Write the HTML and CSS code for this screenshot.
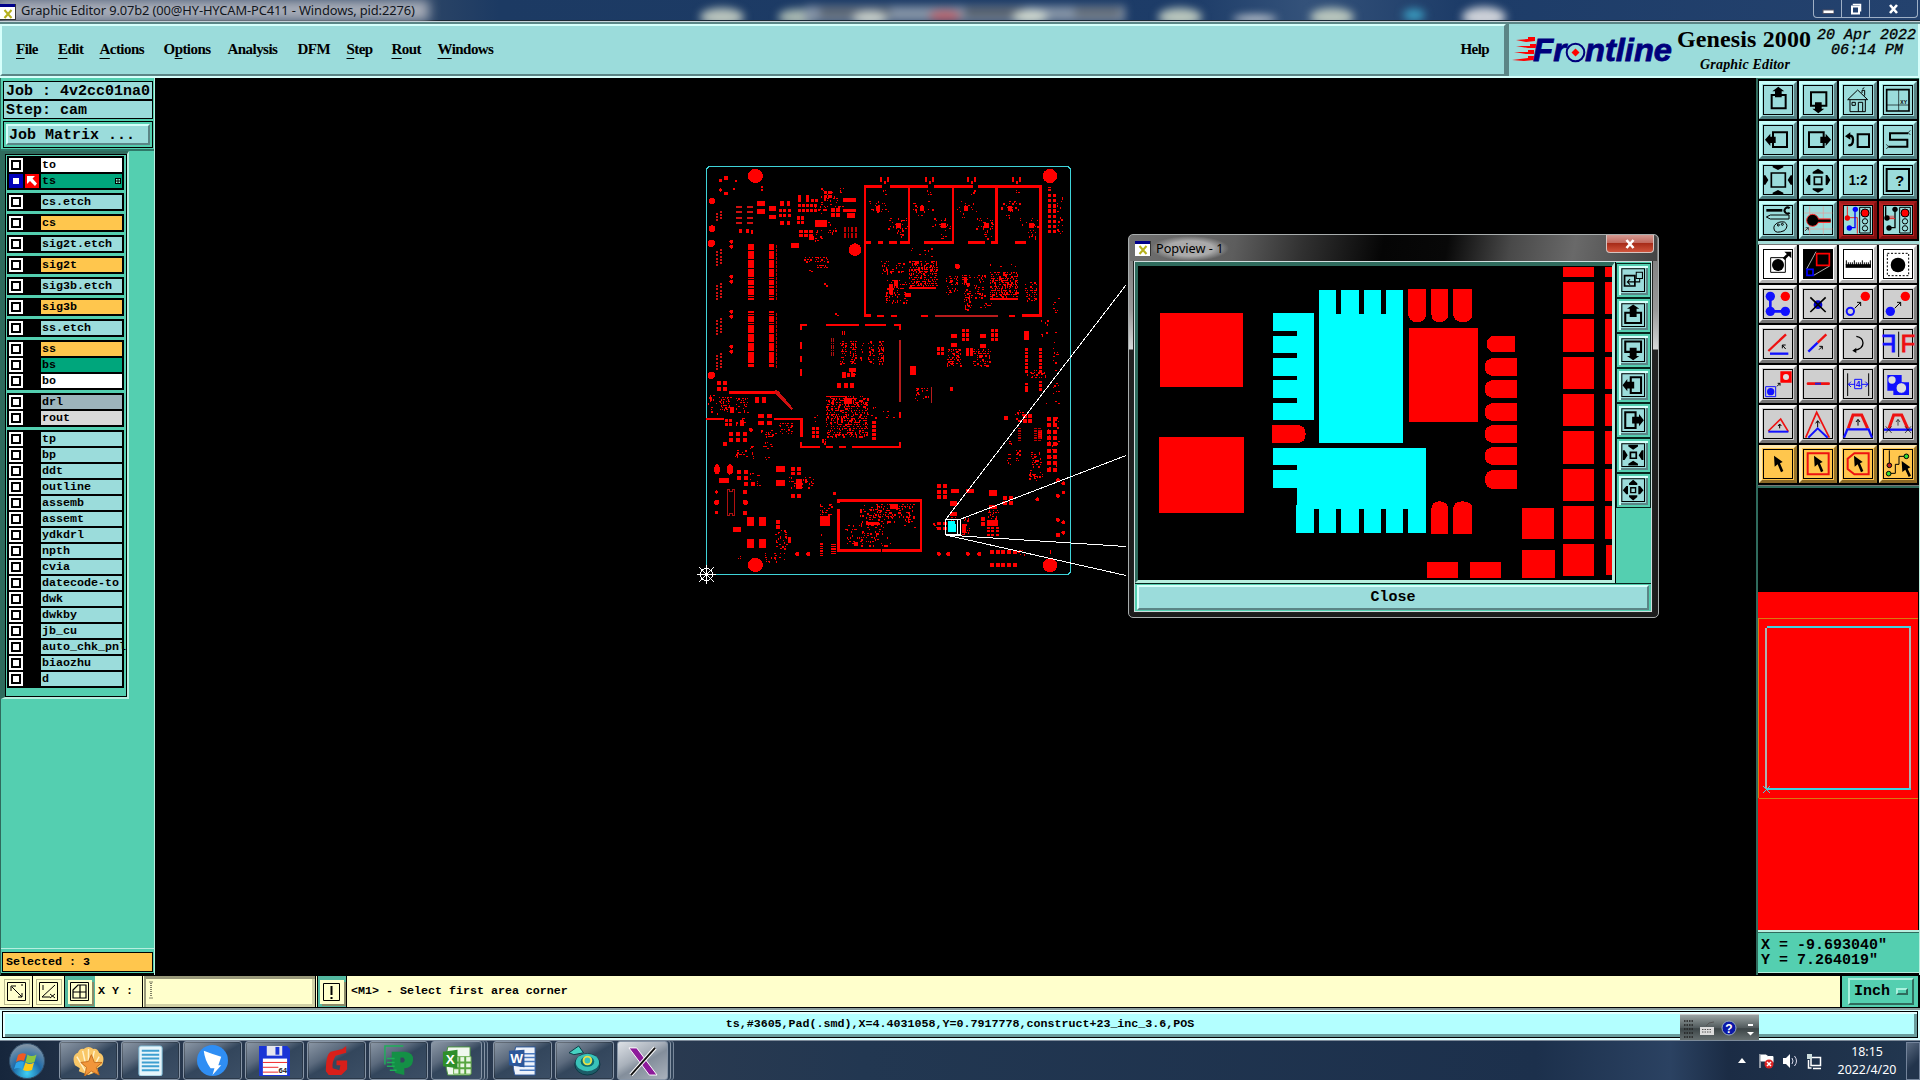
FILE: index.html
```html
<!DOCTYPE html>
<html lang="en">
<head>
<meta charset="utf-8">
<title>Graphic Editor 9.07b2</title>
<link rel="stylesheet" href="styles.css">
</head>
<body>
<header class="titlebar">
  <svg class="smear" width="1920" height="20" viewBox="0 0 1920 20">
    <g class="soft">
      <ellipse cx="722" cy="17" rx="22" ry="9" fill="#b9c4bd"/><ellipse cx="800" cy="17" rx="22" ry="8" fill="#a9b9b2"/>
      <rect x="805" y="6" width="320" height="16" fill="#8291a4"/><rect x="820" y="8" width="70" height="9" fill="#58626f"/><rect x="965" y="8" width="60" height="9" fill="#535c68"/><rect x="1075" y="8" width="45" height="9" fill="#626b76"/>
      <ellipse cx="945" cy="16" rx="16" ry="6" fill="#b86670"/><ellipse cx="870" cy="18" rx="18" ry="7" fill="#c8d0cb"/><ellipse cx="1030" cy="17" rx="18" ry="7" fill="#cfd8cf"/>
      <ellipse cx="1180" cy="17" rx="22" ry="9" fill="#b9c6bd"/><ellipse cx="1255" cy="19" rx="22" ry="4" fill="#c5cbd2"/><ellipse cx="1332" cy="17" rx="22" ry="9" fill="#b9c6bd"/>
      <ellipse cx="1414" cy="15" rx="11" ry="6" fill="#3a9cc0"/><ellipse cx="1484" cy="17" rx="22" ry="10" fill="#cdd1d8"/>
    </g>
  </svg>
  <svg class="appicon" width="16" height="16" viewBox="0 0 16 16"><rect width="16" height="16" fill="#fff"/><rect width="16" height="3" fill="#00008b"/><path d="M4.500 6l7 8M11.500 6l-7 8" stroke="#b5b01c" stroke-width="2"/><path d="M0 15.500H16M15.500 0V16" stroke="#333"/></svg>
  <span class="caption">Graphic Editor 9.07b2 (00@HY-HYCAM-PC411 - Windows, pid:2276)</span>
  <div class="winbtns">
    <span><svg width="12" height="12" viewBox="0 0 12 12"><rect x="1" y="7" width="11" height="3.500" fill="#fff" stroke="#556"/></svg></span>
    <span><svg width="12" height="12" viewBox="0 0 12 12"><path d="M3.500 2V1.500H10.500V8.500" fill="none" stroke="#fff" stroke-width="1.500"/><rect x="2" y="3.500" width="7" height="7" fill="none" stroke="#fff" stroke-width="2"/></svg></span>
    <span class="x"><svg width="12" height="12" viewBox="0 0 12 12"><path d="M2 2l7 8M9 2l-7 8" stroke="#fff" stroke-width="2.600"/></svg></span>
  </div>
</header>

<div class="header">
  <nav class="menubar">
    <span><u>F</u>ile</span><span><u>E</u>dit</span><span><u>A</u>ctions</span><span>O<u>p</u>tions</span><span>Analysis</span><span>DFM</span><span><u>S</u>tep</span><span><u>R</u>out</span><span><u>W</u>indows</span><span>Help</span>
  </nav>
  <div class="brand">
    <svg width="410" height="52" viewBox="1510 24 410 52">
      <g fill="#f00"><path d="M1516 40l12-1v-2h7v4l-9 1zM1516 46l14 0v-2h6v4h-8zM1514 52h14v-2h6v4h-8zM1512 60l16-2v-2h6v4l-10 1z"/></g>
      <g class="logo"><text x="1533" y="60.500" textLength="33" lengthAdjust="spacingAndGlyphs">Fr</text><text x="1585" y="60.500" textLength="87" lengthAdjust="spacingAndGlyphs">ntline</text></g>
      <circle cx="1575.500" cy="52.500" r="8.800" fill="none" stroke="#00007c" stroke-width="2"/><path d="M1575.500 48.500l4 4-4 4-4-4z" fill="#f00"/>
      <text class="product" x="1677" y="46.500" textLength="134">Genesis 2000</text>
      <text class="sub" x="1700" y="69" textLength="90">Graphic Editor</text>
      <text class="clock" x="1817" y="39">20 Apr 2022</text><text class="clock" x="1831" y="54">06:14 PM</text>
    </svg>
  </div>
</div>

<main class="main">
  <aside class="left">
    <div class="jobs">
      <div class="field">Job : 4v2cc01na0</div>
      <div class="field">Step: cam</div>
      <div class="matrix"><div class="bevel">Job Matrix ...</div></div>
    </div>
    <div class="layerwrap">
      <div class="layers">
        <div class="grp"><p><i></i><b class="w">to</b></p><p class="sel"><i></i><svg width="14" height="14" viewBox="0 0 14 14"><rect width="14" height="14" fill="#f00"/><path d="M2 2h8L7.500 4.500 12 9.500 10 12 5 7 2 10z" fill="#fff"/></svg><b class="g">ts<svg width="6" height="6" viewBox="0 0 6 6"><rect width="6" height="6"/><path d="M1 1h1.500v1.500H1zM3.500 1H5v1.500H3.500zM1 3.500h1.500V5H1zM3.500 3.500H5V5H3.500z" fill="#9fd"/></svg></b></p></div>
        <div class="grp"><p><i></i><b>cs.etch</b></p></div>
        <div class="grp"><p><i></i><b class="o">cs</b></p></div>
        <div class="grp"><p><i></i><b>sig2t.etch</b></p></div>
        <div class="grp"><p><i></i><b class="o">sig2t</b></p></div>
        <div class="grp"><p><i></i><b>sig3b.etch</b></p></div>
        <div class="grp"><p><i></i><b class="o">sig3b</b></p></div>
        <div class="grp"><p><i></i><b>ss.etch</b></p></div>
        <div class="grp"><p><i></i><b class="o">ss</b></p><p><i></i><b class="g">bs</b></p><p><i></i><b class="w">bo</b></p></div>
        <div class="grp"><p><i></i><b class="d">drl</b></p><p><i></i><b class="r">rout</b></p></div>
        <div class="grp"><p><i></i><b>tp</b></p><p><i></i><b>bp</b></p><p><i></i><b>ddt</b></p><p><i></i><b>outline</b></p><p><i></i><b>assemb</b></p><p><i></i><b>assemt</b></p><p><i></i><b>ydkdrl</b></p><p><i></i><b>npth</b></p><p><i></i><b>cvia</b></p><p><i></i><b>datecode-to</b></p><p><i></i><b>dwk</b></p><p><i></i><b>dwkby</b></p><p><i></i><b>jb_cu</b></p><p><i></i><b>auto_chk_pnl</b></p><p><i></i><b>biaozhu</b></p><p><i></i><b>d</b></p></div>
      </div>
    </div>
    <div class="selected"><div>Selected : 3</div></div>
  </aside>

  <section class="canvas">
    <svg width="1601" height="897" viewBox="155 78 1601 897" shape-rendering="crispEdges">
      <path d="M709 166.500H1068L1070.500 169V572L1068 574.500H706.500V169z" fill="none" stroke="#3fd3d8"/>
      <g id="board" fill="#f00"></g>
      <path d="M948 521h7v3h1v8h-8z" fill="#0ff"/>
      <path d="M945.500 519.500h15v15h-15zM957.500 520v14" fill="none" stroke="#fff"/>
      <path d="M946 519L1126 285M961 519L1126 455.500M946 535L1126 546.500M946 535L1126 575.500" fill="none" stroke="#fff"/>
      <g fill="none" stroke="#fff"><circle cx="706.500" cy="574.500" r="6"/><path d="M706.500 565v19M697 574.500h19M699 567l15 15M714 567l-15 15"/></g>
    </svg>

    <div class="pop">
      <div class="poptitle">
        <svg width="16" height="15" viewBox="0 0 16 15"><rect width="16" height="15" fill="#fff"/><rect width="16" height="3" fill="#00008b"/><path d="M4.500 5l7 8M11.500 5l-7 8" stroke="#b5b01c" stroke-width="2"/><path d="M15.500 0V15" stroke="#333"/></svg>
        <span>Popview - 1</span>
        <div class="popx"><svg width="12" height="10" viewBox="0 0 12 10"><path d="M2.500 1l7 8M9.500 1l-7 8" stroke="#fff" stroke-width="2.600"/></svg></div>
      </div>
      <div class="popbody">
        <div class="poprow">
          <div class="popcanvas">
            <svg width="474" height="312" viewBox="51 123 1351 936" preserveAspectRatio="none" shape-rendering="crispEdges">
              <g fill="#f00"><path d="M114 264h237v222H114zM111 636h243v228H111zM824 309h197v282H824zM1146 849h91v93h-91zM1146 975h94v84h-94zM875 1011h89v48h-89zM998 1011h88v48h-88z"/>
              <path d="M1263 126h88v30h-88zM1263 171h88v96h-88zM1263 282h88v99h-88zM1263 396h88v96h-88zM1263 507h88v96h-88zM1263 618h88v99h-88zM1263 732h88v96h-88zM1263 843h88v99h-88zM1263 957h88v96h-88z"/>
              <path d="M1383 126h19v30h-19zM1383 171h19v96h-19zM1383 282h19v99h-19zM1383 396h19v96h-19zM1383 507h19v96h-19zM1383 618h19v99h-19zM1383 732h19v96h-19zM1383 843h19v99h-19zM1386 960h16v90h-16z"/>
              <path d="M821 192h51v75q0 24-25 24t-26-24zM887 192h48v75q0 24-24 24t-24-24zM949 192h55v75q0 24-27 24t-28-24zM887 927v-73q0-25 24-25t24 25v73zM949 927v-73q0-25 28-25t27 25v73zM433 600h70q26 0 26 27t-26 27h-70z"/>
              <path d="M1126 333v48h-57q-24 0-24-24t24-24zM1132 399v54h-66q-26 0-26-27t26-27zM1132 465v54h-66q-26 0-26-27t26-27zM1132 534v54h-66q-26 0-26-27t26-27zM1132 600v54h-66q-26 0-26-27t26-27zM1132 666v54h-66q-26 0-26-27t26-27zM1132 735v57h-66q-26 0-26-28t26-29z"/></g>
              <path fill="#0ff" d="M436 264H553V585H436V534H505V519H436V465H505V453H436V399H505V384H436V333H505V318H436zM567 195h49v72h14v-72h51v72h15v-72h48v72h14v-72h49V654H567zM436 669H872V924H821V852H807V924H758V852H744V924H696V852H681V924H630V852H616V924H567V852H553V924H502V840H505V789H436V735H505V720H436z"/>
            </svg>
          </div>
          <div class="poptools">
            <div><svg viewBox="0 0 96 96"><path d="M14 14h66v66H14z"/><path d="M22 34h30v30H22z" stroke-width="5"/><path d="M56 24h18v18H56zM66 42v10H32M38 44l-8 8 8 8"/></svg></div>
            <div><svg viewBox="0 0 96 96"><path d="M14 14h66v66H14z"/><path d="M24 40h46v30H24z" stroke-width="6"/><path class="f" d="M47 16l18 12h-8v24H37V28h-8z"/></svg></div>
            <div><svg viewBox="0 0 96 96"><path d="M14 14h66v66H14z"/><path d="M24 22h46v30H24z" stroke-width="6"/><path class="f" d="M47 76l18-12h-8V40H37v24h-8z"/></svg></div>
            <div><svg viewBox="0 0 96 96"><path d="M14 14h66v66H14z"/><path d="M40 24h30v46H40z" stroke-width="6"/><path class="f" d="M16 47l14-18v8h20v20H30v8z"/></svg></div>
            <div><svg viewBox="0 0 96 96"><path d="M14 14h66v66H14z"/><path d="M24 24h30v46H24z" stroke-width="6"/><path class="f" d="M78 47L64 29v8H44v20h20v8z"/></svg></div>
            <div><svg viewBox="0 0 96 96"><path d="M14 14h66v66H14z"/><path d="M39 39h17v17H39z" stroke-width="5"/><path class="f" d="M33 17h28v5L47 31l-14-9zM33 77h28v-5L47 63l-14 9zM17 33v28h5l9-14-9-14zM77 33v28h-5l-9-14 9-14z"/></svg></div>
            <div><svg viewBox="0 0 96 96"><path d="M14 14h66v66H14z"/><path d="M40 40h14v14H40z" stroke-width="4"/><path class="f" d="M35 32h24v-5L47 17l-12 10zM35 62h24v5L47 77 35 67zM32 35v24h-5L17 47l10-12zM62 35v24h5l10-12-10-12z"/></svg></div>
          </div>
        </div>
        <div class="closebar"><button>Close</button></div>
      </div>
    </div>
  </section>

  <aside class="right">
    <div class="tools t1">
      <div><svg viewBox="0 0 114 114"><path d="M38 42h42v40H38z" stroke-width="6"/><path class="f" d="M58 17l18 14h-8v18H48V31h-8z"/></svg></div>
      <div><svg viewBox="0 0 114 114"><path d="M36 34h46v40H36z" stroke-width="6"/><path class="f" d="M58 97l18-14h-8V64H48v19h-8z"/></svg></div>
      <div><svg viewBox="0 0 114 114"><path d="M26 56L56 27l30 29zM33 56v36h46V56M39 64h10v9H39zM58 92V64h13v28M69 36V28h8v16M70 24l6-4"/></svg></div>
      <div><svg viewBox="0 0 114 114"><path d="M23 26h67v64H23z" stroke-width="5"/><path d="M59 26v64M23 72h67" stroke-width="2"/><text class="tiny" x="74" y="68">XY</text></svg></div>
      <div><svg viewBox="0 0 114 114"><path d="M42 34h42v44H42z" stroke-width="6"/><path class="f" d="M18 56l16-18v9h16v19H34v9z"/></svg></div>
      <div><svg viewBox="0 0 114 114"><path d="M30 34h44v44H30z" stroke-width="6"/><path class="f" d="M96 56L80 38v9H64v19h16v9z"/></svg></div>
      <div><svg viewBox="0 0 114 114"><path d="M56 40h34v38H56z" stroke-width="6"/><path d="M28 72q14 4 14-16 0-12-10-12" stroke-width="7"/><path class="f" d="M18 46l16-12v22z"/></svg></div>
      <div><svg viewBox="0 0 114 114"><path d="M88 37H33v19h52v21H28" stroke-width="6"/><path d="M94 28l-6 7 6 7M22 70l6 7-6 7" stroke-width="2"/></svg></div>
      <div><svg viewBox="0 0 114 114"><path d="M37 36h42v42H37z" stroke-width="5"/><path class="f" d="M41 15h32v4L57 27l-16-8zM41 99h32v-4L57 87l-16 8zM14 43v28h5l9-14-9-14zM100 43v28h-5l-9-14 9-14z"/></svg></div>
      <div><svg viewBox="0 0 114 114"><path d="M46 48h22v22H46z" stroke-width="5"/><path class="f" d="M41 38h32v-5L57 23l-16 10zM41 82h32v4l-16 9-16-9zM34 42v30h-5l-9-15 9-15zM80 42v30h5l9-15-9-15z"/></svg></div>
      <div><svg viewBox="0 0 114 114"><text x="57" y="73" textLength="56" lengthAdjust="spacingAndGlyphs">1:2</text></svg></div>
      <div><svg viewBox="0 0 114 114"><path d="M23 24h67v66H23z" stroke-width="6"/><text x="62" y="76">?</text></svg></div>
      <div><svg viewBox="0 0 114 114"><path d="M22 28h48" stroke-width="8"/><path d="M92 22a9 9 0 1 0 0 13" stroke-width="6"/><path d="M22 48l12-6h56v12H34zM46 74q10-14 30-11 16 10 0 26-26 10-30-2-3-6 0-13"/><circle cx="58" cy="72" r="3"/><circle cx="70" cy="70" r="3"/></svg></div>
      <div><svg viewBox="0 0 114 114"><path d="M32 16v84M73 16v84M16 36h84M16 84h84" stroke="#e59b98" stroke-width="2"/><path d="M41 59h54" stroke="#f33" stroke-width="14"/><circle cx="41" cy="58" r="18" fill="#000" stroke="#f33"/><path d="M41 59h54" stroke-width="7"/><path d="M18 90l10-10M20 80h8v8" stroke-width="2"/></svg></div>
      <div class="alert"><svg viewBox="0 0 114 114"><path d="M25 16v34h30v48" stroke="#e22"/><path d="M48 25v55H30" stroke="#00f" stroke-width="4"/><circle cx="25" cy="51" r="8" fill="#e00" stroke="none"/><g fill="#00f" stroke="none"><circle cx="49" cy="25" r="8"/><circle cx="31" cy="81" r="8"/></g><path d="M62 19h32v77H62z"/><circle cx="78" cy="36" r="12" fill="#f00"/><circle cx="78" cy="61" r="8"/><circle cx="78" cy="82" r="8"/></svg></div>
      <div class="alert"><svg viewBox="0 0 114 114"><path d="M20 16v34M48 25v55H30" stroke-width="4"/><path d="M25 53h23M30 44v8M36 44v8M42 44v8" stroke="#e22"/><g fill="#000" stroke="none"><circle cx="24" cy="51" r="8"/><circle cx="48" cy="25" r="8"/><circle cx="30" cy="81" r="8"/></g><path d="M62 19h32v77H62z"/><circle cx="78" cy="36" r="12" fill="#f00"/><circle cx="78" cy="61" r="8"/><circle cx="78" cy="82" r="8"/></svg></div>
    </div>
    <div class="tools t2">
      <div class="wh"><svg viewBox="0 0 114 114"><path d="M35 38h44v44H35z"/><circle class="f" cx="57" cy="60" r="18"/><path d="M74 42l14-14" stroke-width="8"/><path class="f" d="M76 20h21v20z"/></svg></div>
      <div class="wh"><svg viewBox="0 0 114 114"><path class="f" d="M15 15h84v84H15z"/><path d="M23 72l28-52M44 91l48-28" stroke="#fff" stroke-width="2"/><path d="M53 26h38v35H53z" stroke="#f00" stroke-width="5"/><path d="M24 73h18v18H24z" stroke="#00f" stroke-width="5"/></svg></div>
      <div class="wh"><svg viewBox="0 0 114 114"><path d="M20 63h76" stroke-width="11"/><path d="M22 46v14M28 52v8M34 52v8M40 52v8M46 46v14M52 52v8M58 52v8M64 52v8M70 46v14M76 52v8M82 52v8M88 52v8M94 46v14"/></svg></div>
      <div class="wh"><svg viewBox="0 0 114 114"><path d="M25 25h64v67H25z" stroke-dasharray="6 5"/><circle class="f" cx="57" cy="60" r="22"/></svg></div>

      <div><svg viewBox="0 0 114 114"><path d="M34 34v45h45" stroke="#11f" stroke-width="8"/><g fill="#11f" stroke="none"><circle cx="34" cy="34" r="14"/><circle cx="34" cy="79" r="14"/><circle cx="79" cy="79" r="14"/></g><circle cx="79" cy="34" r="14" fill="#f00" stroke="none"/></svg></div>
      <div><svg viewBox="0 0 114 114"><circle cx="57" cy="59" r="13" fill="#00c" stroke="none"/><path d="M34 37l46 44M80 37L34 81" stroke-width="5"/></svg></div>
      <div><svg viewBox="0 0 114 114"><circle cx="34" cy="79" r="11" stroke="#11f" stroke-width="6"/><circle cx="79" cy="34" r="14" fill="#f00" stroke="none"/><path d="M47 70l18-18M54 52h11v11"/></svg></div>
      <div><svg viewBox="0 0 114 114"><circle cx="34" cy="79" r="14" fill="#11f" stroke="none"/><circle cx="79" cy="34" r="14" fill="#f00" stroke="none"/><path d="M47 70l18-18M54 52h11v11"/></svg></div>

      <div><svg viewBox="0 0 114 114"><path d="M28 78l53-50" stroke="#e11" stroke-width="7"/><path d="M33 86h55" stroke="#11f" stroke-width="7"/><path d="M80 72L70 60M70 70V60h10"/></svg></div>
      <div><svg viewBox="0 0 114 114"><path d="M28 80l28-27" stroke="#11f" stroke-width="7"/><path d="M56 53l26-25" stroke="#e11" stroke-width="7"/><path d="M60 74l10-10M61 64h9v9"/></svg></div>
      <div><svg viewBox="0 0 114 114"><path d="M52 34q20 4 20 20 0 18-26 22" stroke-width="4"/><path class="f" d="M40 77l12-9v16z"/></svg></div>
      <div><svg viewBox="0 0 114 114"><g transform="translate(118 0) scale(-1 1)"><text class="eff blue" x="66" y="82">F</text></g><path d="M59 20v76"/><text class="eff" x="65" y="82">F</text></svg></div>

      <div><svg viewBox="0 0 114 114"><path d="M67 22h28v28H67z" stroke="#f00" stroke-width="6" fill="#f00"/><circle cx="81" cy="36" r="9" fill="#ddd" stroke="none"/><path d="M20 65h30v30H20z" stroke="#11f"/><circle cx="35" cy="80" r="11" fill="#11f" stroke="none"/><path d="M54 64l9-9M56 55h7v7"/></svg></div>
      <div><svg viewBox="0 0 114 114"><path d="M27 56h62" stroke="#e11" stroke-width="8" stroke-linecap="round"/><path d="M48 56h18" stroke="#22d" stroke-width="6"/></svg></div>
      <div><svg viewBox="0 0 114 114"><path d="M26 25v68M89 25v68"/><path d="M28 58h20M68 58h19M36 50l-8 8 8 8M79 50l8 8-8 8M47 43h21v28H47z" stroke="#11f"/><text class="dim" x="57.500" y="67">4</text></svg></div>
      <div><svg viewBox="0 0 114 114"><path d="M25 30h43v22h22v38H43V77H25z" fill="#11f" stroke="none"/><circle cx="39" cy="45" r="11" fill="#ddd" stroke="none"/><circle cx="67" cy="69" r="16" fill="#ddd" stroke="#11f"/></svg></div>

      <div><svg viewBox="0 0 114 114"><path d="M28 78l37-36 23 38" stroke="#e11" stroke-width="5"/><path d="M28 80h60" stroke="#11f" stroke-width="6"/><path d="M62 70V58M57 63l5-6 5 6"/></svg></div>
      <div><svg viewBox="0 0 114 114"><path d="M20 98L53 22l38 76" stroke="#e11" stroke-width="5"/><path d="M28 98l28-28 30 28" stroke="#11f" stroke-width="6"/><path d="M56 66V48M50 55l6-8 6 8"/></svg></div>
      <div><svg viewBox="0 0 114 114"><path d="M28 70l14-40h26l18 40" stroke="#e11" stroke-width="9"/><path d="M15 98l10-25h64l10 25" stroke="#11f" stroke-width="7"/><path d="M57 62V44M51 51l6-8 6 8"/></svg></div>
      <div><svg viewBox="0 0 114 114"><path d="M30 70l14-40h24l18 40" stroke="#e11" stroke-width="9"/><path d="M15 74h84" stroke="#11f" stroke-width="7"/><path d="M20 64l18 20M38 64L20 84M78 64l18 20M96 64L78 84M57 62V44M51 51l6-8 6 8" stroke-width="2"/></svg></div>

      <div class="or"><svg viewBox="0 0 114 114"><path class="f" d="M45 32l26 19-8 4 10 23-7 4-10-24-9 7z"/></svg></div>
      <div class="or"><svg viewBox="0 0 114 114"><path d="M26 25h63v63H26z" stroke="#e11" stroke-width="6"/><path class="f" d="M45 32l26 19-8 4 10 23-7 4-10-24-9 7z"/></svg></div>
      <div class="or"><svg viewBox="0 0 114 114"><path d="M46 25h43v63H46L26 72V41z" stroke="#e11" stroke-width="6"/><path class="f" d="M45 32l26 19-8 4 10 23-7 4-10-24-9 7z"/></svg></div>
      <div class="or"><svg viewBox="0 0 114 114"><path d="M31 16v44M31 85h18V58h11V34h20"/><circle cx="31" cy="61" r="7" fill="#b22"/><circle cx="29" cy="86" r="7" fill="#3d3"/><circle cx="82" cy="34" r="7" fill="#3d3"/><path class="f" d="M68 48l26 19-8 4 10 21-7 4-10-22-9 7z"/></svg></div>
    </div>
    <div class="overview">
      <svg width="161" height="442" viewBox="1758 488 161 442" shape-rendering="crispEdges">
        <rect x="1758" y="488" width="161" height="442" fill="#000"/><rect x="1758" y="592" width="160" height="338" fill="#f00"/>
        <path d="M1758.500 618.500H1918M1758.500 798.500H1918M1758.500 618v180" stroke="#d87a10" fill="none"/>
        <path d="M1766 788V628M1910 628v160" stroke="#b0b0b0" stroke-width="2" fill="none"/><path d="M1767 627h144M1766 789h145" stroke="#3fd3e0" stroke-width="2"/>
        <path d="M1763 786l7 7M1770 786l-7 7" stroke="#3fd3e0"/>
      </svg>
    </div>
    <div class="coords"><div>X = -9.693040"</div><div>Y = 7.264019"</div></div>
  </aside>
</main>

<div class="command">
  <div class="cbtn"><svg width="20" height="20" viewBox="0 0 20 20"><path d="M.5.500h18v18H.5z"/><path d="M5 5l10 10M4 9V4h5M15 11v4h-4M15 2v2"/></svg></div>
  <div class="cbtn"><svg width="20" height="20" viewBox="0 0 20 20"><path d="M.5.500h18v18H.5z"/><path d="M16 3L3 15h8M4 3v5M11 12l5 4M16 12l-5 4"/></svg></div>
  <div class="cbtn gr"><svg width="20" height="20" viewBox="0 0 20 20"><path d="M.5.500h18v18H.5z"/><path d="M3 8l5-5h8v13H3zM10 3v13M3 10h13" stroke-width="1.200"/></svg></div>
  <div class="xy">X Y :</div>
  <div class="entry"><svg width="4" height="18" viewBox="0 0 4 18"><path d="M2 2v14M.5 1h1M2.500 1h1M.5 17h1M2.500 17h1" stroke="#000" stroke-dasharray="1 1"/></svg></div>
  <div class="cbtn gr ex"><svg width="20" height="20" viewBox="0 0 20 20"><path d="M1.500 1.500h16v17h-16z"/><path d="M9.500 4v9M9.500 15v2" stroke-width="2"/></svg></div>
  <div class="msg">&lt;M1&gt; - Select first area corner</div>
  <div class="unit"><div>Inch<i></i></div></div>
</div>

<div class="status"><div>ts,#3605,Pad(.smd),X=4.4031058,Y=0.7917778,construct+23_inc_3.6,POS</div>
  <div class="langbar"><svg width="79" height="26" viewBox="0 0 79 26"><path d="M4 6h9M4 10h9M4 14h9M4 18h9M4 22h9" stroke="#222" stroke-width="1.500" stroke-dasharray="1.500 1"/><rect x="20" y="12" width="14" height="8" fill="#ddd"/><path d="M22 14.500h10M22 17h10" stroke="#555" stroke-dasharray="1.500 1"/><path d="M26 11q2-4 8-4" stroke="#555" fill="none"/><circle cx="49" cy="13" r="7" fill="#0a17a8" stroke="#9ab"/><path d="M68 10h5" stroke="#fff" stroke-width="2"/><path d="M67 17h7l-3.500 3.500z" fill="#fff"/><text x="49" y="17.500">?</text></svg></div>
</div>

<footer class="taskbar">
  <svg class="orb" width="44" height="39" viewBox="0 0 44 39"><defs><radialGradient id="o" cx=".5" cy=".85" r=".8"><stop offset="0" stop-color="#3fd0f5"/><stop offset=".5" stop-color="#1d6aa8"/><stop offset="1" stop-color="#7f93a5"/></radialGradient></defs><circle cx="22" cy="20" r="17.500" fill="url(#o)" stroke="#33506b"/><path d="M13 14q4-3 8-1l-2 7q-4-2-8 1z" fill="#f05a22"/><path d="M22.500 13.500q4 3 9 0l-2 7.500q-5 2-9 0z" fill="#8cc63e"/><path d="M11 22q4-3 8-1l-2 7q-4-2-8 0z" fill="#2fa4e7"/><path d="M20.500 21.500q4 3 8.500 0l-2 7.500q-5 2-9 0z" fill="#fdc916"/></svg>
  <div class="tb"><svg viewBox="0 0 34 32"><path d="M17 31L7 27l1-3-5-3Q-1 11 6 8q2-5 6-4 5-4 10 0 4-1 6 4 7 3 3 13l-5 3 1 3z" fill="#f9c768"/><path d="M15 29L5 12M16 29L11 6M17 29V4M18 29l5-23M19 29l9-17" stroke="#fff1c9" stroke-width="1.500"/><path d="M20 10l3 8 8 0-6 5 3 8-8-4-7 5 2-9-6-5 8-1z" fill="#f2963a" stroke="#c56e1e"/></svg></div>
  <div class="tb"><svg viewBox="0 0 34 32"><rect x="5" y="1" width="24" height="31" rx="2" fill="#e6f5fb" stroke="#79b7d3"/><path d="M8 6h18M8 10h18M8 14h18M8 18h18M8 22h18M8 26h18" stroke="#3e9fd0" stroke-width="2"/></svg></div>
  <div class="tb"><svg viewBox="0 0 34 32"><circle cx="17" cy="16" r="16" fill="#2f8ef4"/><path d="M8 6q10 4 18 6l-3 9h3l-9 10 2-7h-4q-6-8-7-18z" fill="#fff"/></svg></div>
  <div class="tb"><svg viewBox="0 0 34 32"><path d="M1 1h29l3 3v28H1z" fill="#1a35d6"/><path d="M9 1h16v10H9z" fill="#e6e6ee"/><path d="M18 2h4v8h-4z" fill="#1a35d6"/><path d="M5 14h25v17H5z" fill="#fff"/><path d="M5 18h25M5 23h16M5 28h16" stroke="#e22"/><text x="21" y="29">64</text></svg></div>
  <div class="tb"><svg viewBox="0 0 34 32"><path d="M27 1v7l-11 3q-4 7-3 13l7 2 1-5h-4v-5h11v9l-6 6H9l-3-4q0-17 5-20l12-3z" fill="#d81f1a"/></svg></div>
  <div class="tb"><svg viewBox="0 0 34 32"><path fill-rule="evenodd" d="M10 7h14q9 1 8 9-1 8-9 8v7l-9-2-4-8zM19 13v5h3q3-2 0-5z" fill="#149046"/><path d="M3 20V1h19M5 14h8M5 18h8M5 22h8M8 26h7" stroke="#1fae5a" fill="none" stroke-width="1.500"/></svg></div>
  <div class="tb stack"><svg viewBox="0 0 34 32"><path d="M8 2h23v29H8q-4-14 0-29z" fill="#f0f8ee" stroke="#49953f"/><path d="M14 12h18v18H14z" fill="#e9f6e3" stroke="#6fb353"/><path d="M14 18h18M14 24h18M20 12v18M26 12v18" stroke="#58a541" stroke-width="2"/><path d="M3 7l15-2v19L3 22z" fill="#2f8f2a"/><text class="app" x="10.500" y="20">X</text></svg></div>
  <div class="tb"><svg viewBox="0 0 34 32"><path d="M10 2h20v29H9q-4-14 1-29z" fill="#eef3fb" stroke="#2b579a"/><path d="M18 9h12M18 13h12M18 17h12M14 22h16M14 26h16" stroke="#4c7cc1" stroke-width="1.500"/><path d="M3 6l16-1v18L3 21z" fill="#2b579a"/><text class="app" x="11" y="18.500">W</text></svg></div>
  <div class="tb"><svg viewBox="0 0 34 32"><ellipse cx="20" cy="20" rx="13" ry="11" fill="#1d5c68" stroke="#0d3944"/><ellipse cx="20" cy="18" rx="12" ry="9" fill="#39c2b9"/><ellipse cx="20" cy="17" rx="7" ry="5.500" fill="#0b6a70"/><ellipse cx="20" cy="16" rx="4" ry="4" fill="#39c2b9" stroke="#e6e04a" stroke-width="2"/><path d="M1 8l10-7 5 7-10 2z" fill="#46d2c2" stroke="#0d3944"/></svg></div>
  <div class="tb active stack"><svg viewBox="0 0 34 32"><path d="M3 3h8l21 28h-8z" fill="#8d1b9a" stroke="#fff"/><path d="M30 3L5 31" stroke="#fff" stroke-width="4"/><path d="M30 3L5 31" stroke="#111" stroke-width="2"/></svg></div>
  <div class="tray">
    <svg width="90" height="20" viewBox="1736 1051 90 20"><path d="M1738 1063h8l-4-5z" fill="#fff"/><path d="M1760 1054v14M1761 1055h5l2 1.500h5v6h-6l-2-1.500h-4z" stroke="#fff" fill="#fff"/><circle cx="1769" cy="1064" r="4.500" fill="#d22"/><path d="M1767 1062l4 4M1771 1062l-4 4" stroke="#fff" stroke-width="1.500"/><path d="M1783 1058h3l4-4v14l-4-4h-3z" fill="#fff"/><path d="M1792 1058q2 3 0 6M1794.500 1056q4 5 0 10" stroke="#dde" fill="none"/><path d="M1811 1057.500h9.500v8H1811zM1813 1068.500h8M1808.500 1060v8h3" fill="none" stroke="#fff" stroke-width="1.500"/><path d="M1807 1054h5v5h-5z" fill="#cdd"/></svg>
    <div class="time"><span>18:15</span><span>2022/4/20</span></div>
    <div class="peek"></div>
  </div>
</footer>
<script src="board.js"></script>
</body>
</html>
```

FILE: styles.css
```css
* { box-sizing: border-box; margin: 0; padding: 0; }
:root {
  --aqua: #9bdcdb; --green: #54cfb0; --hi: #d6fffb; --lo: #5b8586; --deep: #2f6b5d;
  --mono: "Liberation Mono", "DejaVu Sans Mono", monospace;
  --serif: "Liberation Serif", serif;
  --ui: "Noto Sans", "Open Sans", sans-serif;
}
body { width: 1920px; height: 1080px; overflow: hidden; background: #000; color: #000; display: flex; flex-direction: column; font-family: var(--mono); }
svg { display: block; flex: none; }
i { font-style: normal; }

/* window caption */
.titlebar { height: 22px; flex: none; position: relative; z-index: 0; display: flex; align-items: center; background: linear-gradient(90deg, #53617a, #2c4566 22%, #1c3a63 26%, #1d3c68 62%, #34527a 68%, #1d3c68 76%, #24426e); border-bottom: 1px solid #c6d2d8; box-shadow: inset 0 -1px #1a2633; overflow: hidden; }
.smear { position: absolute; left: 0; top: 0; }
.soft { filter: blur(4px); }
.appicon { position: relative; top: 1px; }
.caption { position: relative; margin-left: 5px; height: 21px; font: 12.9px/21px var(--ui); width: 402px; white-space: nowrap; letter-spacing: -.12px; color: #10151c; }
.caption::before { content: ""; position: absolute; inset: 0 -6px 0 -24px; background: #a9aeb9; filter: blur(6px); z-index: -1; }
.winbtns { position: relative; margin-left: auto; margin-right: 2px; align-self: flex-start; display: flex; height: 18px; border: 1px solid #9fb0c6; border-top: 0; border-radius: 0 0 4px 4px; }
.winbtns span { width: 28px; display: grid; place-items: center; border-right: 1px solid #9fb0c6; }
.winbtns .x { width: 47px; border: 0; }

/* menu bar and product panel */
.header { height: 56px; flex: none; display: flex; background: var(--aqua); border-top: 2px solid var(--lo); border-bottom: 2px solid var(--hi); }
.menubar { width: 1506px; border: 2px solid; border-color: var(--hi) var(--lo) var(--lo) var(--hi); padding: 0 0 2px 14px; display: grid; grid-template-columns: 42px 41.5px 64px 64px 70px 49px 45px 46px 1023px 60px; align-items: center; font: bold 15px/20px var(--serif); letter-spacing: -.55px; }
.menubar u { text-underline-offset: 4px; text-decoration-thickness: 1px; }
.brand { flex: 1; border-left: 2px solid var(--lo); box-shadow: inset 1px 0 var(--lo); border-right: 2px solid var(--hi); overflow: hidden; }
.brand svg { margin-left: 2px; }
.logo text { font: italic bold 31px "Liberation Sans", sans-serif; fill: #00007c; stroke: #00007c; stroke-width: .8; }
.product { font: bold 24px var(--serif); }
.sub { font: italic bold 14px var(--serif); }
.clock { font: italic 15px var(--mono); stroke: #000; stroke-width: .35; }

.main { height: 897px; flex: none; display: flex; }

/* left column */
.left { width: 155px; background: var(--green); display: flex; flex-direction: column; border-right: 1px solid #b7efdf; border-left: 1px solid var(--deep); }
.jobs { height: 73px; padding: 3px 1px 0 2px; border-bottom: 2px solid #2f7868; }
.field { height: 19px; border: 1px solid #000; background: var(--aqua); font: bold 15px/19px var(--mono); padding-left: 2px; white-space: nowrap; }
.matrix { margin-top: 2px; height: 27px; border: 1px solid #000; padding: 2px; }
.bevel { height: 21px; background: var(--aqua); border: 2px solid; border-color: var(--hi) var(--lo) var(--lo) var(--hi); font: bold 15px/19px var(--mono); padding-left: 1px; white-space: nowrap; }
.layerwrap { height: 548px; width: 128px; border-left: 4px solid var(--deep); border-top: 3px solid var(--deep); border-right: 2px solid #b7efdf; border-bottom: 2px solid #b7efdf; }
.layers { height: 543px; border: 1px solid #000; padding: 1px 1px; display: flex; flex-direction: column; gap: 3px; }
.grp { background: #000; padding: 2px; display: flex; flex-direction: column; gap: 2px; width: 117px; }
.grp p { height: 14px; display: flex; }
.grp i { width: 14px; height: 14px; background: #fff; border: 2px solid #fff; box-shadow: inset 0 0 0 2px #000; margin-right: 18px; }
.grp b { width: 81px; background: var(--aqua); font: bold 11.67px/15px var(--mono); padding-left: 1px; white-space: nowrap; }
.grp .w { background: #fff; } .grp .o { background: #ffc64d; } .grp .g { background: #00a67c; } .grp .d { background: #9db4bb; } .grp .r { background: #d9d9d9; }
.grp .sel i { background: #fff; border-color: #00b; border-width: 4px; box-shadow: none; margin-right: 2px; }
.grp .sel > svg { margin-right: 2px; }
.grp .sel b { display: flex; justify-content: space-between; align-items: center; padding-right: 1px; }
.selected { margin-top: auto; height: 27px; padding: 3px 1px 1px 1px; border-top: 1px solid #b7efdf; border-bottom: 2px solid #000; }
.selected div { height: 20px; border: 1px solid #000; background: #ffc64d; font: bold 11.67px/18px var(--mono); padding-left: 3px; }

/* drawing area */
.canvas { width: 1601px; position: relative; background: #000; }

.pop { position: absolute; left: 973px; top: 156px; width: 531px; height: 384px; border: 1px solid #a8adad; border-radius: 5px; background: linear-gradient(180deg, #777 0, #999 75px, #d5d8d8 114px, #222 115px, #1c1c1c 100%); padding: 0 6px 0 5px; }
.poptitle { height: 26px; margin: 0 -5px 0 -4px; padding-left: 5px; display: flex; align-items: center; position: relative; background: linear-gradient(100deg, #707070, #5d5d5d 20%, #303030 33%, #050505 48%, #080808 60%, #494949 72%, #696969 84%, #444); border-radius: 4px 4px 0 0; font: 12.7px/25px var(--ui); }
.poptitle span { background: radial-gradient(closest-side, #aaa 60%, transparent); padding: 0 6px 0 5px; }
.popx { position: absolute; right: 3px; top: 0; width: 48px; height: 18px; border: 1px solid #d8c4c0; border-top: 0; border-radius: 0 0 4px 4px; background: linear-gradient(#d59a92, #c36a5f 45%, #a82c19 50%, #d0543c); display: grid; place-items: center; }
.popbody { height: 351px; border: 1px solid #cfdede; outline: 1px solid #222; background: var(--green); }
.poprow { display: flex; height: 321px; }
.popcanvas { width: 480px; height: 321px; background: #000; border: 3px solid; border-color: var(--deep) #b7efdf #b7efdf var(--deep); overflow: hidden; border-top-width: 4px; }
.poptools { flex: 1; display: flex; flex-direction: column; gap: 2px; border-left: 1px solid #000; padding: 2px 1px 0 1px; }
.poptools div { width: 33px; height: 33px; background: var(--aqua); outline: 1px solid #06251d; border: 2px solid var(--green); box-shadow: inset 2px 2px var(--hi), inset -2px -2px var(--lo); }
.poptools svg { width: 33px; height: 33px; margin: -2px 0 0 -2px; fill: none; stroke: #000; stroke-width: 3; }
.f { fill: #000; stroke: none; }
.closebar { height: 28px; border-top: 1px solid #06251d; padding: 1px 2px; }
.closebar button { width: 100%; height: 25px; background: var(--aqua); border: 2px solid; border-color: var(--hi) var(--lo) var(--lo) var(--hi); font: bold 15px/20px var(--mono); color: #000; display: block; }

/* right column */
.right { width: 164px; background: #000; border-left: 2px solid var(--deep); border-right: 1px solid #b7efdf; }
.tools { display: grid; grid-template-columns: repeat(4, 38px); grid-auto-rows: 38px; gap: 2px; padding-left: 1px; background: #000; }
.t1 { height: 166px; border-bottom: 3px solid #a5dcd8; border-top: 1px solid var(--deep); padding-top: 2px; }
.t2 { height: 242px; border-top: 1px solid #777; border-bottom: 1px solid #777; }
.tools div { border: 3px solid; border-color: #c4fffa #5b8586 #4c7c7d #c4fffa; background: var(--aqua); position: relative; }
.tools svg { width: 38px; height: 38px; margin: -3px 0 0 -3px; fill: none; stroke: #000; stroke-width: 3; background: linear-gradient(#000, #000) 4px 4px / 30px 1px no-repeat, linear-gradient(#000, #000) 4px 33px / 30px 1px no-repeat, linear-gradient(#000, #000) 4px 4px / 1px 30px no-repeat, linear-gradient(#000, #000) 33px 4px / 1px 30px no-repeat; }
.tools text { font: bold 44px "Liberation Sans", sans-serif; fill: #000; stroke: none; text-anchor: middle; }
.tools .tiny { font-size: 15px; }
.tools .eff { font-size: 70px; font-weight: normal; fill: #e11; stroke: #e11; text-anchor: start; }
.tools .eff.blue { fill: #11f; stroke: #11f; }
.tools .dim { font-size: 25px; fill: #11f; }
.tools .alert { border-color: #a51c1c #7e1010 #7e1010 #b52222; box-shadow: inset 0 0 0 1px #b22; }
.t2 div { background: #cfcfcf; border-color: #f5f5f5 #808080 #757575 #f5f5f5; }
.t2 .wh { background: #fff; border-color: #fff #bbb #b0b0b0 #fff; }
.t2 .or { background: #ffc64d; border-color: #ffe9b0 #99752b #8a6826 #ffe9b0; }
.overview { height: 444px; border-top: 2px solid var(--deep); overflow: hidden; }
.coords { height: 43px; background: var(--green); border-top: 2px solid #b7efdf; border-bottom: 1px solid #b7efdf; box-shadow: inset 0 1px #2f6b5d; font: bold 15px/15px var(--mono); padding: 6px 0 0 3px; white-space: nowrap; }

/* command line */
.command { height: 33px; flex: none; display: flex; background: #ffc; border-top: 1px solid #000; border-bottom: 1px solid #000; padding-left: 1px; }
.cbtn { width: 32px; height: 31px; border-right: 1px solid #000; display: grid; place-items: center; position: relative; }
.cbtn svg { fill: none; stroke: #000; stroke-width: 1; box-shadow: 0 0 0 2px #ffc, 0 0 0 3px #b9b98e; }
.cbtn.gr { background: #54b9a0; border-color: #54b9a0; width: 30px; }
.cbtn.gr svg { background: #ffc; box-shadow: 0 0 0 2px #ffc, 2px 2px 0 2px #8a8a68; }
.cbtn.ex { border: solid #000; border-width: 0 1px; margin-left: 1px; }
.xy { width: 47px; padding-left: 3px; font: bold 11.67px/31px var(--mono); white-space: nowrap; }
.entry { width: 174px; border: 1px solid #000; border-width: 0 1px; padding: 5px 0 0 6px; box-shadow: inset 1px 0 #ffc, inset 3px 3px #99997a, inset -3px -3px #d0d0a5; }
.msg { flex: 1; padding-left: 4px; font: bold 11.67px/31px var(--mono); }
.unit { width: 80px; background: var(--green); border-left: 2px solid #000; padding: 2px 4px 2px 6px; border-right: 2px solid #000; }
.unit div { height: 27px; border: 2px solid; border-color: #a9f2de var(--deep) var(--deep) #a9f2de; font: bold 15px/23px var(--mono); padding: 0 4px 0 4px; display: flex; align-items: center; justify-content: space-between; }
.unit i { width: 12px; height: 7px; border: 2px solid; border-color: #a9f2de var(--deep) var(--deep) #a9f2de; background: var(--green); }

/* status line */
.status { height: 32px; flex: none; position: relative; background: #dff; border-top: 2px solid #8a9c9c; padding: 1px 2px; }
.status > div:first-child { height: 27px; border: 1px solid #000; background: #b3ffff; box-shadow: inset 2px 2px #e6ffff, inset -3px -3px #6a9c9c; text-align: center; font: bold 11.67px/25px var(--mono); }
.langbar { position: absolute; left: 1680px; top: 4px; width: 79px; height: 26px; background: linear-gradient(#99a3a3, #535c5e 50%, #3c4547 55%, #666f70); border-top: 1px solid #ccc; }
.langbar text { font: bold 12px "Liberation Sans", sans-serif; fill: #fff; text-anchor: middle; }

/* taskbar */
.taskbar { height: 40px; flex: none; display: flex; background: linear-gradient(90deg, #16263c, #26364c 6%, #2a3a50 34%, #223751 45%, #1c304c 80%, #2b4262 87%, #1b2c45 90%, #223750); border-top: 1px solid #7d8b9a; padding-left: 5px; }
.orb { margin-right: 10px; }
.tb { width: 59px; height: 39px; margin-right: 3px; border: 1px solid #8795a6; border-radius: 3px; background: linear-gradient(150deg, #8c98a6 0, #5b6a7d 35%, #33465c 50%, #3c4f66 100%); display: grid; place-items: center; box-shadow: inset 0 0 0 1px rgba(0,0,0,.25); }
.tb svg { width: 33px; height: 31px; }
.tb text { font: bold 8px "Liberation Sans", sans-serif; fill: #222; }
.tb .app { font-size: 14px; fill: #fff; text-anchor: middle; }
.tb.stack { width: 51px; margin-right: 11px; box-shadow: 2px 0 0 #31445a, 3px 0 0 #8795a6, 5px 0 0 #31445a, 6px 0 0 #78879a; }
.tb.active { background: linear-gradient(150deg, #dde1e6 0, #a9b1bb 40%, #838e9b 55%, #aab2bc); }
.tray { margin-left: auto; display: flex; align-items: center; color: #fff; font: 12.4px/18px var(--ui); }
.time { width: 76px; display: flex; flex-direction: column; align-items: center; margin: 0 1px 0 3px; }
.peek { width: 14px; height: 38px; border: 1px solid #73839a; background: linear-gradient(135deg, #5a6a80, #22344c 60%); }
```

FILE: board.js
```js
// Board artwork, in third-of-a-pixel units, drawn as an upper and a lower half.
const NS = "http://www.w3.org/2000/svg";
const board = document.getElementById("board");

function half(top) {
  const g = document.createElementNS(NS, "g");
  g.setAttribute("transform", `translate(700 ${top}) scale(.33333)`);
  board.appendChild(g);
  return g;
}
function path(g, d, fill) {
  const p = document.createElementNS(NS, "path");
  p.setAttribute("d", d);
  if (fill) p.setAttribute("fill", fill);
  g.appendChild(p);
}
const box = (x, y, w, h) => `M${x} ${y}h${w}v${h}h${-w}z`;
function rects(g, list, fill) {
  path(g, list.trim().split(/\s+/).map(t => box(...t.split(",").map(Number))).join(""), fill);
}
function discs(g, list) {
  list.trim().split(/\s+/).forEach(t => {
    const [x, y, rx, ry] = t.split(",").map(Number);
    const e = document.createElementNS(NS, "ellipse");
    e.setAttribute("cx", x); e.setAttribute("cy", y);
    e.setAttribute("rx", rx); e.setAttribute("ry", ry || rx);
    g.appendChild(e);
  });
}
// regular pad array: x, y, columns, rows, pitch x, pitch y, pad w, pad h
function grid(g, x, y, nc, nr, px, py, w, h, fill) {
  let d = "";
  for (let r = 0; r < nr; r++) for (let c = 0; c < nc; c++) d += box(x + c * px, y + r * py, w, h);
  path(g, d, fill);
}
let seed = 7;
const rnd = () => (seed = (seed * 16807) % 2147483647) / 2147483647;
// dense small-part area
function scatter(g, x, y, w, h, density, fill) {
  let d = "";
  x = Math.round(x / 3) * 3; y = Math.round(y / 3) * 3;
  for (let j = 0; j < h; j += 6) for (let i = 0; i < w; i += 6)
    if (rnd() < density) d += box(x + i + (rnd() < .5 ? 0 : 3), y + j, rnd() < .35 ? 6 : 3, rnd() < .35 ? 6 : 3);
  path(g, d, fill);
}

const A = half(160);
discs(A, "166,48,23,21 1050,48,22,21 465,269,19 36,123,9 36,206,10 34,250,11 34,646,11 772,319,8 61,61,5 61,90,5");
rects(A, `72,48,12,12 72,96,12,9 105,60,6,6 100,84,6,6 183,78,6,6 183,87,6,6
 492,75,54,9 570,75,113,9 702,75,116,9 834,75,190,9 491,75,7,395 1018,75,8,395 624,84,6,168 756,84,6,168 886,84,8,168
 497,243,16,9 534,243,15,9 567,243,24,9 600,243,30,9 672,243,90,9 804,243,51,9 873,243,20,9 945,243,33,9
 492,462,21,9 531,464,21,7 573,464,18,7 663,464,21,7 927,464,18,7 966,462,60,9
 540,51,7,15 552,63,6,8 561,51,7,15 675,51,7,15 687,63,6,8 696,51,7,15 801,51,7,15 813,63,6,8 822,51,7,15 936,51,7,15 948,63,6,8 957,51,7,15
 171,122,24,15 171,147,24,15 207,138,21,15 207,164,21,13 240,123,12,15 261,123,9,15 240,183,12,12 261,183,9,12
 429,114,39,12 429,147,39,9 441,159,24,15 345,180,36,21 273,249,24,15 327,228,15,12
 117,207,9,12 138,207,9,12 152,210,6,12
 300,492,21,6 378,492,99,6 495,492,63,6 582,492,21,6 300,498,6,12 597,498,6,12 300,546,6,21 300,588,6,18 300,627,6,21
 630,618,18,27 426,636,12,18 447,624,21,12 441,640,9,12 453,640,12,12 972,513,15,27
 753,522,18,12 753,549,18,12 840,522,18,12 840,552,18,12`);
rects(A, "705,464,189,7 597,540,6,120", "#b81c1c");
const rail = [[252,18],[273,24],[300,24],[327,24],[354,3],[361,14],[378,6],[388,18],[407,4],[414,6],[453,6],[462,4],[468,18],[488,3],[495,23],[521,24],[548,24],[575,27],[604,4],[611,10]];
rail.forEach(([y, h]) => { rects(A, `144,${y},18,${h} 207,${y},15,${h}`); });
for (let y = 255; y < 618; y += 12) if (y < 415 || y > 453) rects(A, `228,${y},3,9`, "#c00000");
grid(A, 108, 138, 2, 4, 33, 16, 18, 6, "#d01010");
grid(A, 237, 146, 3, 2, 13, 15, 9, 11);
grid(A, 294, 105, 2, 1, 24, 0, 9, 21);
grid(A, 294, 132, 5, 2, 12, 15, 9, 9); grid(A, 333, 117, 2, 1, 13, 0, 9, 8);
grid(A, 372, 93, 2, 2, 13, 13, 10, 9); grid(A, 291, 168, 2, 2, 12, 14, 9, 11);
grid(A, 393, 144, 2, 2, 16, 15, 12, 12); grid(A, 297, 210, 3, 2, 15, 12, 12, 8);
scatter(A, 360, 84, 70, 56, .3); scatter(A, 345, 140, 35, 30, .35); scatter(A, 384, 180, 20, 54, .4);
scatter(A, 345, 210, 26, 36, .4); grid(A, 432, 201, 4, 2, 11, 18, 5, 14, "#c00000");
scatter(A, 312, 291, 70, 18, .8); scatter(A, 352, 316, 30, 12, .8); rects(A, "327,330,6,3 333,334,6,3 372,370,6,6 378,375,6,6 405,460,6,4 411,465,6,4");
[48, 60].forEach((x, i) => { [[158,3],[273,5],[375,5],[480,5],[585,5]].forEach(([y, n]) => grid(A, x, y - i * 6, 1, n, 0, 10, 6, 6, "#d01010")); });
[245, 350, 455, 560].forEach(y => discs(A, `94,${y},6 94,${y + 15},6`));
[534, 666, 798, 930].forEach((x, i) => {
  rects(A, `${x - 6},138,12,15 ${x + 55 + i % 2 * 2},188,15,15`);
  scatter(A, x - 27, 123, 60, 33, .24); scatter(A, x - 12, 153, 12, 24, .25);
  scatter(A, x + 30, 174, 60, 36, .28); scatter(A, x + 54, 210, 20, 27, .35); scatter(A, x + 15, 90, 12, 16, .6);
});
grid(A, 1044, 102, 2, 8, 15, 15.500, 9, 10); scatter(A, 1070, 110, 18, 110, .3); rects(A, "1045,80,8,5 1045,88,8,5");
scatter(A, 543, 303, 36, 40, .5); scatter(A, 588, 309, 24, 30, .6); scatter(A, 627, 303, 80, 84, .8);
rects(A, "582,360,12,18 567,372,12,30 615,399,18,12 627,381,81,6");
scatter(A, 555, 360, 66, 72, .4); scatter(A, 627, 264, 80, 25, .12);
scatter(A, 738, 348, 36, 60, .45); scatter(A, 786, 345, 24, 60, .65); scatter(A, 793, 399, 24, 54, .75);
scatter(A, 822, 345, 36, 72, .5); scatter(A, 870, 336, 84, 84, .8); rects(A, "870,414,81,6 792,351,9,18"); scatter(A, 840, 430, 36, 15, .5);
scatter(A, 975, 366, 36, 60, .5); scatter(A, 840, 312, 110, 12, .15); scatter(A, 1060, 408, 18, 66, .2); scatter(A, 1020, 480, 20, 50, .2); scatter(A, 1060, 510, 18, 130, .16);
grid(A, 786, 507, 2, 3, 12, 13, 9, 10); grid(A, 873, 507, 2, 3, 12, 13, 9, 10); grid(A, 711, 562, 2, 2, 12, 13, 9, 11); grid(A, 798, 564, 2, 2, 12, 13, 9, 11);
scatter(A, 741, 567, 40, 50, .65); scatter(A, 818, 567, 54, 50, .6);
grid(A, 976, 564, 1, 7, 0, 11, 8, 8); grid(A, 1017, 564, 1, 7, 0, 11, 9, 8); scatter(A, 990, 640, 45, 18, .4);
grid(A, 393, 534, 2, 8, 6, 7, 3, 5, "#b01010"); scatter(A, 420, 543, 15, 70, .75); scatter(A, 450, 543, 18, 70, .9);
scatter(A, 504, 543, 15, 70, .6); scatter(A, 534, 543, 18, 70, .85); scatter(A, 480, 548, 8, 50, .4); rects(A, "426,513,3,12 432,513,3,12");

const B = half(370);
discs(B, "34,16,11 166,585,23,21 1050,586,22,21 51,298,9,16 90,298,10,16 50,397,8 50,366,5 50,428,5 136,397,8 153,180,6 403,370,5 292,552,6 325,552,6 717,552,6 745,552,6 804,552,6 838,552,6 1074,331,6 1090,340,6 1074,378,6 1090,368,5 1074,450,6 1090,457,6 1074,495,7 1090,488,6 1012,388,6");
rects(B, `87,63,144,8 222,143,87,7 301,143,8,57 18,145,54,5 300,228,60,6 378,228,21,6 417,228,21,6 456,228,147,6 300,216,6,12 597,216,6,12 597,126,6,18
 630,0,18,15 426,6,12,18 411,387,255,8 411,387,8,12 411,417,8,128 660,387,6,158 411,537,132,8 546,537,120,8
 228,288,27,18 228,330,27,18 288,327,18,30 57,324,30,14 141,441,21,27 177,441,21,27 141,507,21,27 177,507,21,27 99,471,24,15
 360,438,30,30 753,357,24,12 798,357,24,12 750,393,21,15 867,360,24,18 867,405,24,12 750,426,21,12 861,450,33,18 1014,180,12,27 750,50,9,12 912,138,12,12 90,112,12,18 120,150,12,18 69,216,12,12
 130,360,12,12 130,423,12,12 228,450,12,12 228,466,12,12 264,500,9,18 786,462,12,27 462,516,12,12 1050,540,4,12`);
rects(B, "597,0,6,96 684,98,12,2 694,50,2,50", "#b81c1c");
path(B, "M226 60l8 2 46 54-5 4-50-50z", "#d01010");
path(B, "M81 357h9v6h6v-6h9v81h-9v-6h-6v6h-9zM84 361v73h3v-6h12v6h3v-73h-3v6H87v-6z", "#b01010");
grid(B, 51, 33, 2, 2, 17, 17, 12, 12); grid(B, 165, 82, 2, 1, 21, 0, 12, 16); grid(B, 174, 132, 2, 2, 26, 20, 17, 12);
grid(B, 87, 186, 3, 2, 21, 18, 12, 12); grid(B, 75, 147, 2, 2, 12, 12, 9, 9); grid(B, 273, 291, 2, 2, 17, 14, 12, 11); grid(B, 273, 372, 2, 1, 17, 0, 12, 12);
grid(B, 411, 39, 3, 1, 20, 0, 12, 14); grid(B, 336, 172, 2, 3, 12, 11, 8, 9); grid(B, 516, 153, 1, 5, 0, 12, 12, 8);
scatter(B, 24, 75, 42, 60, .22); scatter(B, 60, 80, 36, 48, .45); scatter(B, 108, 84, 36, 45, .45); scatter(B, 105, 144, 26, 24, .4);
scatter(B, 222, 160, 54, 36, .4); scatter(B, 183, 180, 33, 57, .35); scatter(B, 105, 240, 36, 24, .5); scatter(B, 150, 228, 12, 42, .4); scatter(B, 195, 262, 15, 9, .6);
grid(B, 111, 300, 2, 2, 21, 18, 12, 11); grid(B, 132, 336, 2, 1, 21, 0, 12, 12); scatter(B, 150, 310, 30, 42, .25);
scatter(B, 378, 78, 123, 123, .7); rects(B, "432,84,24,18 378,78,60,2"); scatter(B, 450, 0, 18, 18, .6); scatter(B, 342, 135, 12, 24, .5); scatter(B, 366, 208, 12, 14, .7);
scatter(B, 510, 110, 96, 36, .1); scatter(B, 645, 54, 40, 42, .3);
scatter(B, 306, 321, 36, 36, .4); scatter(B, 264, 321, 24, 36, .4);
scatter(B, 360, 402, 33, 33, .4); scatter(B, 360, 480, 9, 24, .3); grid(B, 360, 520, 1, 6, 0, 7, 9, 4); grid(B, 393, 521, 1, 5, 0, 7, 15, 4);
scatter(B, 435, 465, 45, 65, .3); scatter(B, 480, 405, 50, 125, .38); scatter(B, 525, 402, 120, 40, .5); scatter(B, 610, 435, 36, 42, .4); scatter(B, 530, 440, 50, 90, .17); rects(B, "498,456,39,9 570,402,24,15");
scatter(B, 225, 480, 36, 60, .4); scatter(B, 195, 550, 60, 27, .35); scatter(B, 105, 558, 20, 9, .4);
grid(B, 711, 342, 2, 3, 17, 17, 13, 12); grid(B, 909, 378, 2, 2, 18, 16, 12, 12); grid(B, 711, 456, 2, 2, 17, 15, 12, 10); scatter(B, 699, 458, 12, 24, .4);
scatter(B, 861, 420, 36, 27, .5); grid(B, 861, 471, 3, 3, 13, 10, 9, 6); grid(B, 843, 441, 1, 2, 0, 16, 12, 12); scatter(B, 786, 444, 24, 54, .5); scatter(B, 750, 440, 30, 10, .4);
grid(B, 870, 540, 5, 1, 17, 0, 12, 12); grid(B, 870, 579, 5, 1, 17, 0, 12, 12); scatter(B, 950, 540, 20, 15, .5);
grid(B, 1041, 141, 2, 9, 17, 19, 12, 12); scatter(B, 1040, 140, 36, 160, .1);
grid(B, 969, 132, 2, 2, 16, 16, 12, 12); scatter(B, 945, 120, 30, 36, .4); grid(B, 1002, 174, 2, 6, 12, 7, 9, 4, "#c00000"); grid(B, 954, 174, 1, 6, 0, 7, 9, 4, "#c00000");
scatter(B, 921, 252, 12, 33, .5); scatter(B, 948, 240, 9, 48, .6); scatter(B, 993, 246, 30, 48, .5); scatter(B, 987, 300, 39, 36, .35); scatter(B, 927, 212, 10, 12, .6);
grid(B, 976, 38, 1, 3, 0, 10, 8, 8); grid(B, 1017, 32, 1, 3, 0, 11, 9, 8); scatter(B, 980, 0, 54, 24, .35); scatter(B, 1060, 38, 18, 66, .2); scatter(B, 1028, 92, 12, 15, .3);
```
